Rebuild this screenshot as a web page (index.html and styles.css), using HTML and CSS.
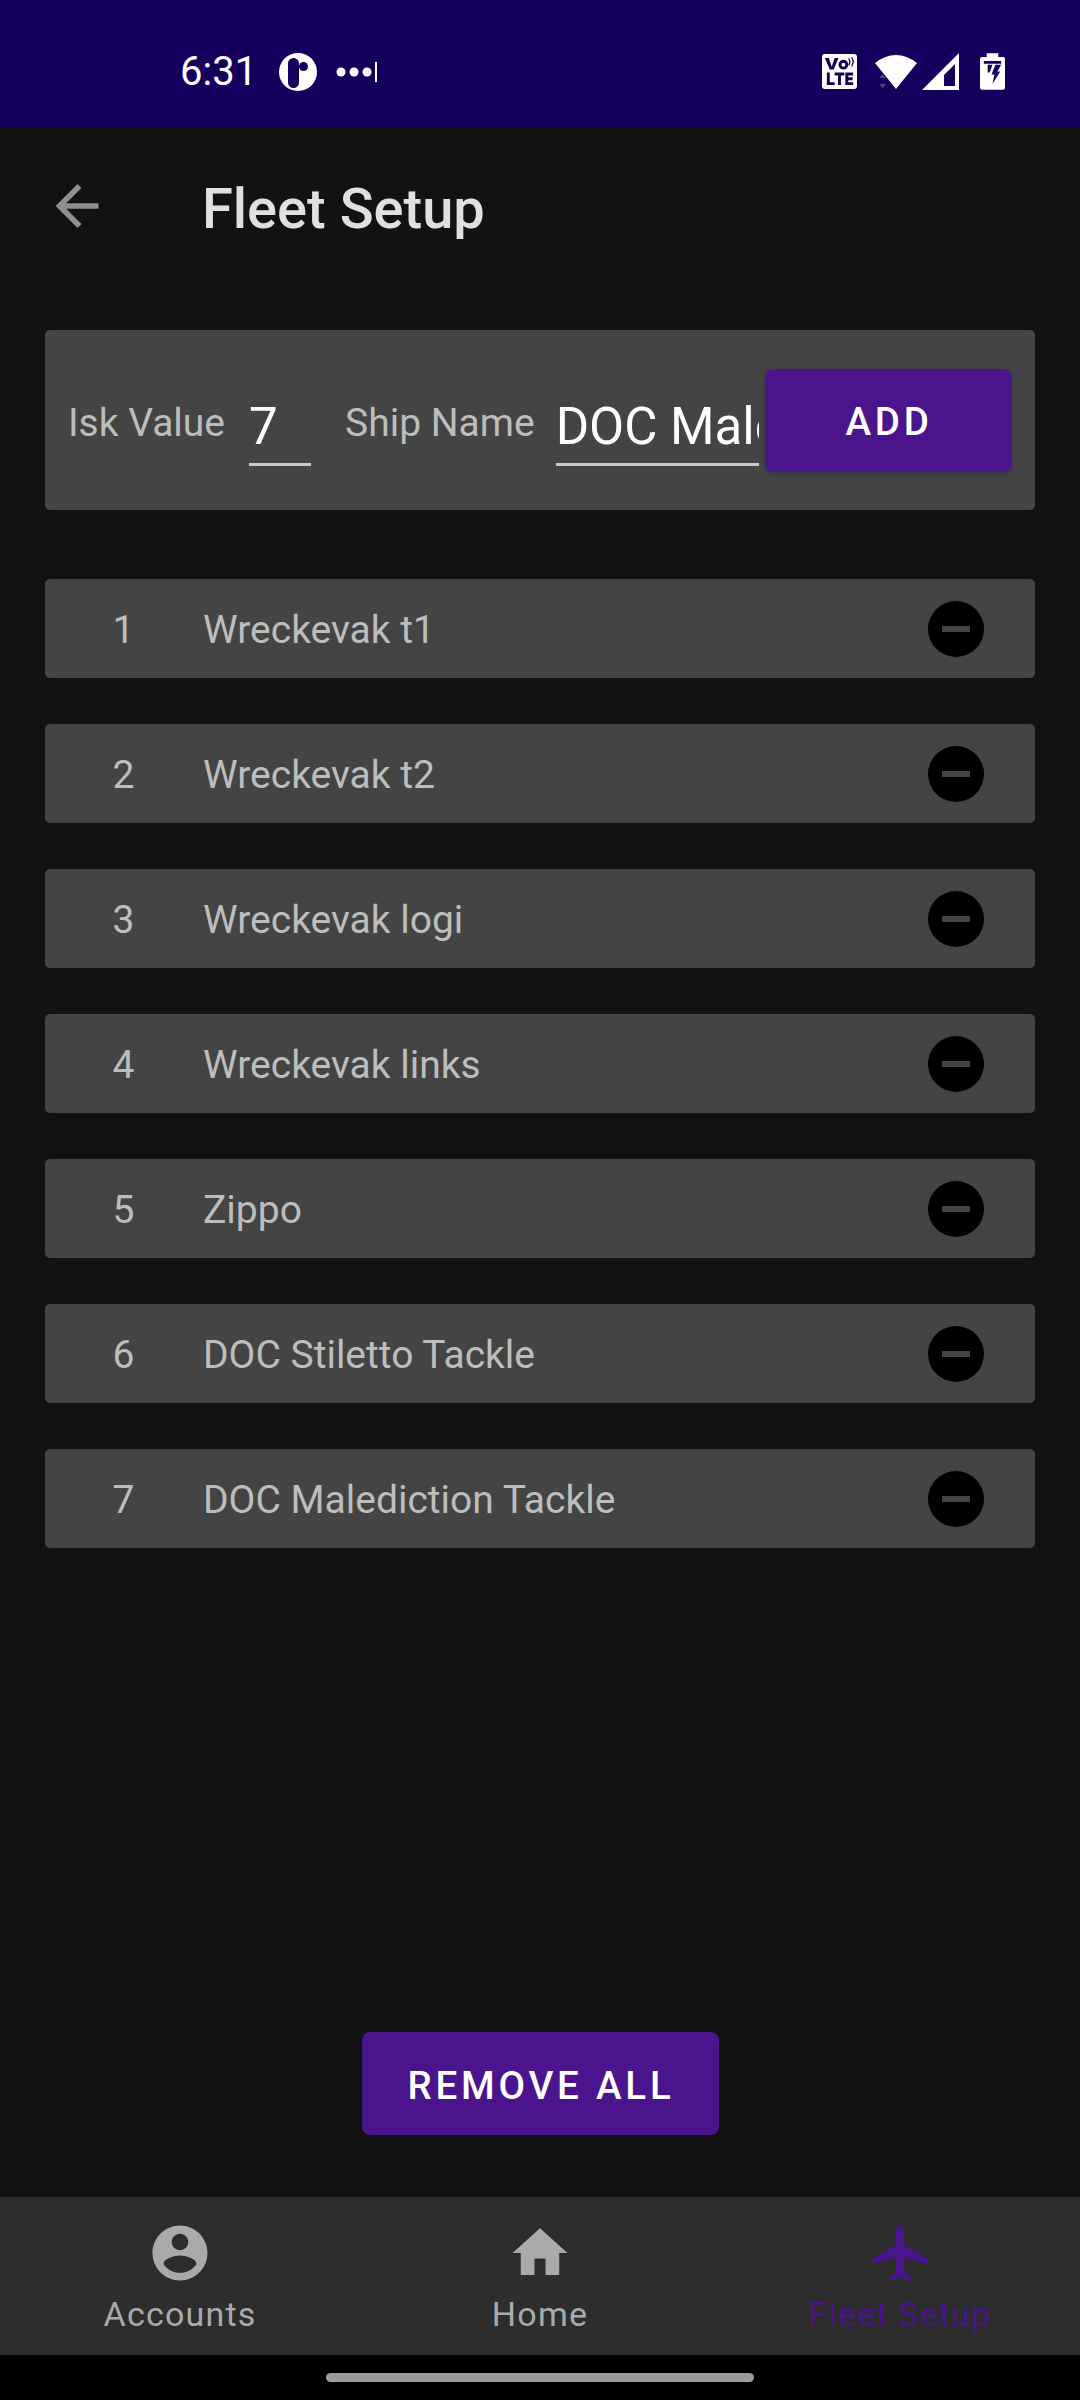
FILE: index.html
```html
<!DOCTYPE html>
<html lang="en">
<head>
<meta charset="utf-8">
<title>Fleet Setup</title>
<link rel="stylesheet" href="styles.css">
</head>
<body>
<div class="screen">
  <header class="status">
    <div class="status-left">
      <span class="time">6:31</span>
      <svg class="ic-app" viewBox="0 0 38 38"><circle cx="19" cy="19" r="19" fill="#fff"/><rect x="9" y="5" width="11" height="30" rx="5.5" fill="#14005c"/><circle cx="24.500" cy="13.500" r="4.500" fill="#14005c"/></svg>
      <svg class="ic-dots" viewBox="0 0 42 22"><circle cx="5" cy="11" r="4.500" fill="#fff"/><circle cx="18" cy="11" r="4.500" fill="#fff"/><circle cx="31" cy="11" r="4.500" fill="#fff"/><rect x="39" y="1" width="2" height="20" fill="#fff"/></svg>
    </div>
    <div class="status-right">
      <svg class="ic-volte" viewBox="0 0 36 36"><rect width="36" height="36" rx="3" fill="#fff"/><path d="M3 4h4l3 9 3-9h4l-5 12H8zM17 11a5 5 0 1 0 10 0 5 5 0 1 0-10 0zM20 11a2 2 0 1 1 4 0 2 2 0 1 1-4 0zM28 4l1.500 4-1.500 4-1-.4 1-3.600-1-3.600zM31 3l2 5-2 5-1-.4 1.500-4.600-1.500-4.600zM5 19h3v10h5v3H5zM13 19h10v3h-3.500v10h-3V22H13zM24 19h8v3h-5v2h4.500v3H27v2h5v3h-8z" fill="#14005c" fill-rule="evenodd"/></svg>
      <svg class="ic-wifi" viewBox="0 0 42 36"><path d="M0 9Q21-7 42 9L21 35Z" fill="#fff"/><path d="M4 24l3.500-4 3.500 4zM4 30h7l-3.500 4z" fill="#fff" opacity=".25"/></svg>
      <svg class="ic-signal" viewBox="0 0 38 37"><path d="M0 37L37 0v37z" fill="#fff"/><path d="M22 22l11-11v22H22z" fill="#14005c"/></svg>
      <svg class="ic-battery" viewBox="0 0 26 38"><path d="M7 0h12v4h5a2 2 0 0 1 2 2v30a2 2 0 0 1-2 2H2a2 2 0 0 1-2-2V6a2 2 0 0 1 2-2h5z" fill="#fff"/><path d="M4 8h18v3H4zM8 12h5l-3 8H8zM16 12h6l-4 7h3l-8 13 2-10h-3z" fill="#14005c"/></svg>
    </div>
  </header>

  <div class="appbar">
    <svg class="ic-back" viewBox="0 0 44 46"><path d="M44 23H6M25 3L5 23l20 20" fill="none" stroke="#8f8f8f" stroke-width="5.500"/></svg>
    <h1 class="title">Fleet Setup</h1>
  </div>

  <main class="content">
    <section class="card form">
      <span class="label isk-label">Isk Value</span>
      <div class="field isk-field"><span class="field-text">7</span></div>
      <span class="label ship-label">Ship Name</span>
      <div class="field ship-field"><span class="field-text">DOC Malediction Tackle</span></div>
      <button class="btn btn-add">ADD</button>
    </section>

    <ul class="list">
      <li class="card row"><span class="num">1</span><span class="name">Wreckevak t1</span><span class="remove"></span></li>
      <li class="card row"><span class="num">2</span><span class="name">Wreckevak t2</span><span class="remove"></span></li>
      <li class="card row"><span class="num">3</span><span class="name">Wreckevak logi</span><span class="remove"></span></li>
      <li class="card row"><span class="num">4</span><span class="name">Wreckevak links</span><span class="remove"></span></li>
      <li class="card row"><span class="num">5</span><span class="name">Zippo</span><span class="remove"></span></li>
      <li class="card row"><span class="num">6</span><span class="name">DOC Stiletto Tackle</span><span class="remove"></span></li>
      <li class="card row"><span class="num">7</span><span class="name">DOC Malediction Tackle</span><span class="remove"></span></li>
    </ul>

    <div class="actions"><button class="btn btn-remove">REMOVE ALL</button></div>
  </main>

  <nav class="nav">
    <div class="tab">
      <svg class="tab-ic" viewBox="0 0 24 24"><path fill-rule="evenodd" d="M12 2C6.480 2 2 6.480 2 12s4.480 10 10 10 10-4.480 10-10S17.520 2 12 2zm0 3c1.660 0 3 1.340 3 3s-1.340 3-3 3-3-1.340-3-3 1.340-3 3-3zm0 14.200c-2.500 0-4.710-1.280-6-3.220.03-1.990 4-3.080 6-3.080 1.990 0 5.970 1.090 6 3.080-1.290 1.940-3.500 3.220-6 3.220z" fill="#aaa"/></svg>
      <span class="tab-label">Accounts</span>
    </div>
    <div class="tab">
      <svg class="tab-ic" viewBox="0 0 24 24"><path d="M10 20v-6h4v6h5v-8h3L12 3 2 12h3v8z" fill="#aaa"/></svg>
      <span class="tab-label">Home</span>
    </div>
    <div class="tab tab-active">
      <svg class="tab-ic" viewBox="0 0 24 24"><path d="M22 16v-2l-8.500-5V3.500C13.500 2.670 12.830 2 12 2s-1.500.67-1.500 1.500V9L2 14v2l8.500-2.500V19L8 20.500V22l4-1 4 1v-1.500L13.500 19v-5.500z" fill="#4a148c"/></svg>
      <span class="tab-label">Fleet Setup</span>
    </div>
  </nav>

  <footer class="gesture"><span class="gesture-bar"></span></footer>
</div>
</body>
</html>
```

FILE: styles.css
```css
* { box-sizing: border-box; }
html, body { margin: 0; padding: 0; background: #121212; }
.screen {
  width: 1080px;
  height: 2400px;
  display: flex;
  flex-direction: column;
  font-family: Roboto, "Liberation Sans", sans-serif;
  background: #121212;
  overflow: hidden;
}

/* status bar */
.status {
  height: 127px;
  flex: none;
  background: #14005c;
  display: flex;
  justify-content: space-between;
  align-items: center;
  padding: 16px 75px 0 180px;
}
.status-left, .status-right { display: flex; align-items: center; }
.time { color: #fff; font-size: 40px; width: 99px; }
.ic-app { width: 38px; height: 38px; }
.ic-dots { width: 42px; height: 22px; margin-left: 19px; }
.ic-volte { width: 35px; height: 35px; }
.ic-wifi { width: 42px; height: 36px; margin-left: 18px; }
.ic-signal { width: 38px; height: 37px; margin-left: 5px; }
.ic-battery { width: 25px; height: 37px; margin-left: 20px; }

/* app bar */
.appbar {
  height: 165px;
  flex: none;
  display: flex;
  align-items: center;
  padding-left: 54px;
}
.ic-back { width: 45px; height: 46px; flex: none; margin-top: -8px; }
.title {
  margin: 0 0 2px 103px;
  font-size: 56px;
  font-weight: 500;
  color: #e0e0e0;
}

/* content */
.content {
  flex: 1;
  display: flex;
  flex-direction: column;
  padding: 38px 45px 0 45px;
}
.card { background: #444; border-radius: 5px; }
.form {
  height: 180px;
  flex: none;
  display: flex;
  align-items: center;
  padding-left: 23px;
}
.label { font-size: 39px; color: #bdbdbd; flex: none; margin-top: 6px; white-space: nowrap; }
.field {
  height: 70px;
  flex: none;
  border-bottom: 3px solid #c8c8c8;
  overflow: hidden;
  margin-top: 22px;
  padding-bottom: 6px;
  display: flex;
  align-items: center;
}
.field-text { color: #fff; font-size: 51px; white-space: nowrap; }
.isk-field { width: 62px; margin-left: 24px; }
.ship-label { margin-left: 34px; }
.ship-field { width: 203px; margin-left: 21px; }
.btn {
  border: 0;
  border-radius: 8px;
  background: #4a148c;
  color: #fff;
  font-family: inherit;
  font-weight: 500;
  font-size: 38.500px;
  letter-spacing: 3.800px;
  box-shadow: 0 2px 5px rgba(0, 0, 0, .2);
  padding: 3px 0 0 2px;
}
.btn-add { width: 247px; height: 103px; margin-left: 6px; flex: none; }

.list {
  list-style: none;
  margin: 69px 0 0;
  padding: 0;
  display: flex;
  flex-direction: column;
  gap: 46px;
}
.row {
  height: 99px;
  display: flex;
  align-items: center;
  font-size: 39px;
  color: #bdbdbd;
}
.num { width: 158px; padding: 2px 1px 0 0; text-align: center; flex: none; }
.name { flex: 1; padding-top: 2px; }
.remove {
  position: relative;
  width: 56px;
  height: 56px;
  border-radius: 50%;
  background: #000;
  margin-right: 51px;
  flex: none;
}
.remove::after {
  content: "";
  position: absolute;
  left: 14px;
  right: 14px;
  top: 25px;
  height: 6px;
  background: #444;
}

.actions { flex: 1; display: flex; justify-content: center; align-items: flex-end; padding-bottom: 62px; }
.btn-remove { width: 357px; height: 103px; }

/* bottom nav */
.nav {
  height: 158px;
  flex: none;
  background: #2d2d2d;
  display: grid;
  grid-template-columns: repeat(3, 1fr);
}
.tab {
  display: flex;
  flex-direction: column;
  align-items: center;
  padding-top: 23px;
  color: #aaa;
}
.tab-ic { width: 66px; height: 66px; flex: none; }
.tab-label { font-size: 34px; letter-spacing: 1.200px; margin-top: 8px; }
.tab-active { color: #4a148c; }

.gesture {
  flex: none;
  height: 45px;
  background: #000;
  display: flex;
  justify-content: center;
  padding-top: 18px;
}
.gesture-bar { display: block; width: 428px; height: 9px; border-radius: 5px; background: #9b9b9b; }
```
